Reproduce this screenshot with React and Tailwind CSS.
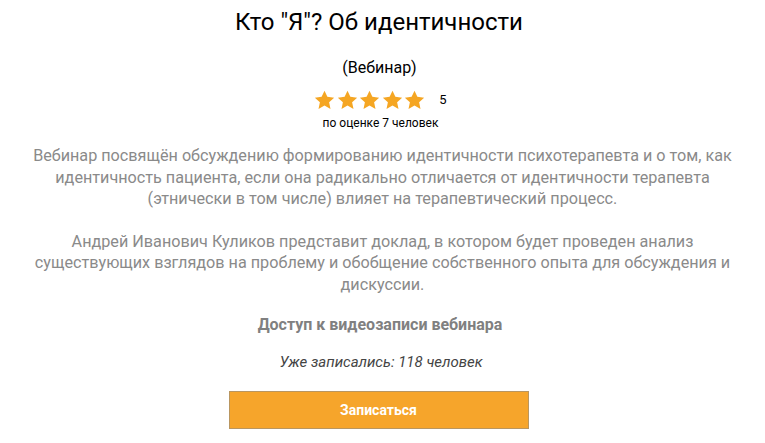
import React from "react";

function Star() {
  return (
    <svg width="21" height="20" viewBox="0 0 24 23" className="block">
      <path d="M12 0.8l3.3 7.1 7.8 0.9-5.8 5.3 1.6 7.7L12 17.9l-6.9 3.9 1.6-7.7L0.9 8.8l7.8-0.9z" fill="#f5a623" />
    </svg>
  );
}

export default function App() {
  return (
    <div className="w-[765px] h-[443px] bg-white overflow-hidden flex flex-col items-center font-['Roboto',sans-serif]">
      <h1 className="mt-[6px] mr-[7px] text-[24px] leading-[32px] text-black">Кто "Я"? Об идентичности</h1>
      <div className="mt-[20px] mr-[6px] text-[16px] leading-[20px] text-black">(Вебинар)</div>
      <div className="mt-[12px] mr-[4px] flex items-center">
        <div className="flex gap-[1.5px]">
          <Star />
          <Star />
          <Star />
          <Star />
          <Star />
        </div>
        <span className="ml-[14px] text-[13px] text-black">5</span>
      </div>
      <div className="mt-[5px] mr-[4px] text-[12px] leading-[16px] text-black">по оценке 7 человек</div>
      <div className="mt-[14px] w-[730px] text-center text-[16.2px] leading-[21.5px] text-[#8a8a8a]">
        <p>
          Вебинар посвящён обсуждению формированию идентичности психотерапевта и о том, как идентичность пациента, если она радикально отличается от идентичности терапевта (этнически в том числе) влияет на терапевтический процесс.
        </p>
        <p className="mt-[21px]">
          Андрей Иванович Куликов представит доклад, в котором будет проведен анализ существующих взглядов на проблему и обобщение собственного опыта для обсуждения и дискуссии.
        </p>
      </div>
      <div className="mt-[20px] mr-[5px] text-[16px] leading-[20px] font-bold text-[#808080]">Доступ к видеозаписи вебинара</div>
      <div className="mt-[17px] mr-[3px] text-[15px] leading-[20px] italic text-[#444444]">Уже записались: 118 человек</div>
      <button className="mt-[19px] mr-[8px] w-[300px] h-[38px] bg-[#f6a52b] border border-[#b99660] text-white font-bold text-[14px]">
        Записаться
      </button>
    </div>
  );
}
